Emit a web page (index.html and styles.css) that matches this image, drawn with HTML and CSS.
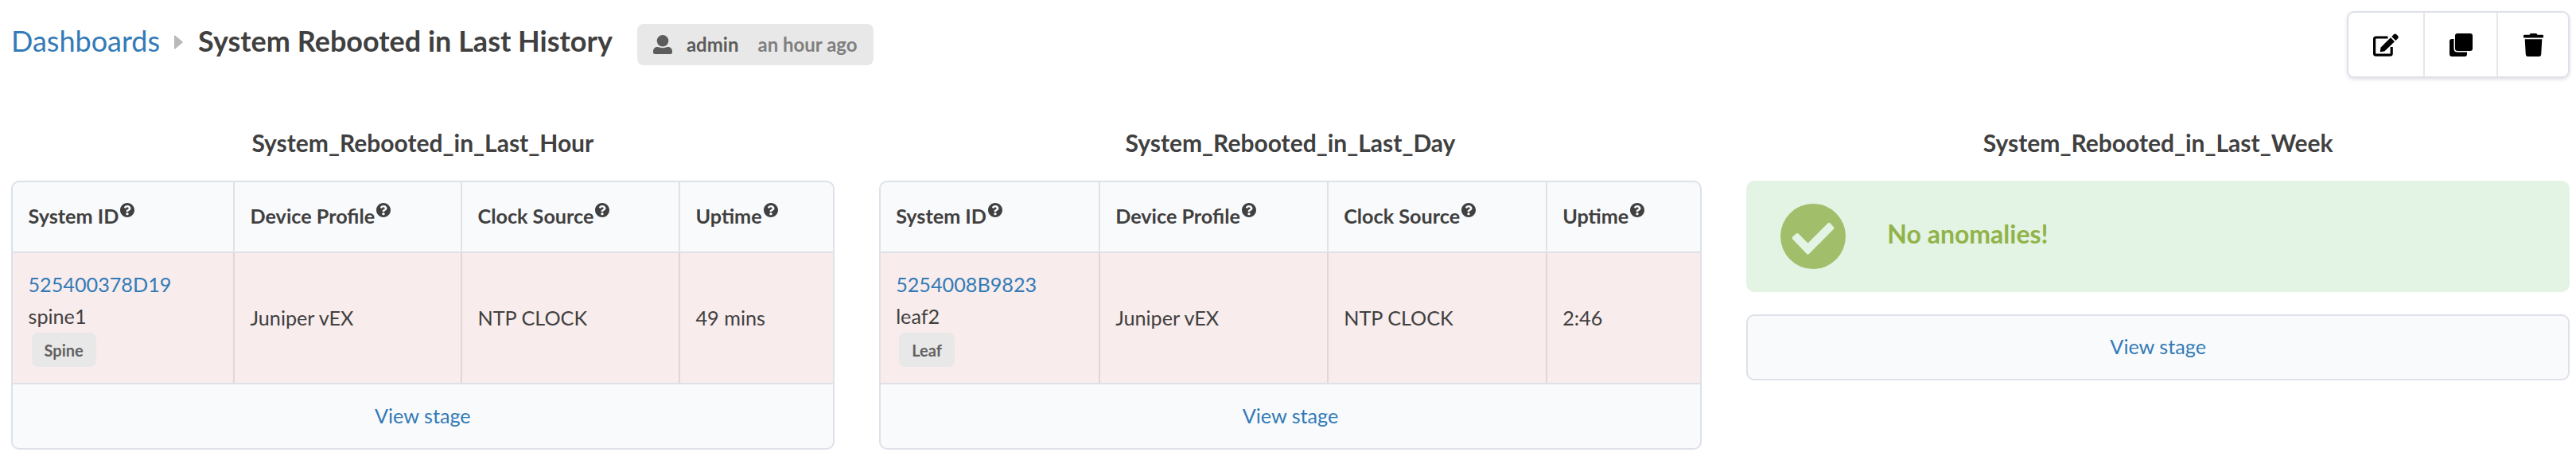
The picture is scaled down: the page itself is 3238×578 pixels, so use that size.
FILE: index.html
```
<!DOCTYPE html>
<html lang="en">
<head>
<meta charset="utf-8">
<title>System Rebooted in Last History</title>
<link rel="stylesheet" href="styles.css">
</head>
<body>
<svg class="sprite" aria-hidden="true">
  <symbol id="help" viewBox="8 8 496 496"><path fill-rule="evenodd" d="M504 256c0 137-111 248-248 248S8 393 8 256 119 8 256 8s248 111 248 248zM262.700 90c-54.500 0-89.300 23-116.500 63.800-3.500 5.300-2.400 12.400 2.700 16.300l34.700 26.300c5.200 3.900 12.600 3 16.700-2.100 17.900-22.700 30.100-35.800 57.300-35.800 20.400 0 45.700 13.100 45.700 33 0 15-12.400 22.700-32.500 34C247.100 238.500 216 254.900 216 296v4c0 6.600 5.400 12 12 12h56c6.600 0 12-5.400 12-12v-1.300c0-28.500 83.200-29.600 83.200-106.700 0-58-60.200-102-116.500-102zM256 338c-25.400 0-46 20.600-46 46s20.600 46 46 46 46-20.600 46-46-20.600-46-46-46z"/></symbol>
</svg>
<header class="topbar">
  <nav class="crumbs">
    <a class="link" href="#">Dashboards</a>
    <svg class="caret" viewBox="0 0 11 18"><path d="M0 1Q0 0 1 .6L10.400 8.200Q11 9 10.400 9.800L1 17.400Q0 18 0 17Z"/></svg>
    <h1>System Rebooted in Last History</h1>
  </nav>
  <div class="author">
    <svg class="user" viewBox="0 0 24 24"><ellipse cx="12" cy="7.300" rx="7.300" ry="7.300"/><path d="M0 21.500V20.500C0 17 2.500 15 5.500 15Q7 15 8 15.600Q12 17 16 15.600Q17 15 18.500 15C21.500 15 24 17 24 20.500V21.500Q24 24 21.500 24H2.500Q0 24 0 21.500Z"/></svg>
    <span class="name">admin</span><span class="when">an hour ago</span>
  </div>
  <div class="actions">
    <button class="edit" aria-label="Edit"><svg viewBox="0 0 32 29"><path fill="none" stroke="#000" stroke-width="3.200" d="M18.500 5H3.600Q1.600 5 1.600 7V25.200Q1.600 27.200 3.600 27.200H21.200Q23.200 27.200 23.200 25.200V17"/><path d="M22 5.200L27 10.200L14.500 22.300L9.800 23.300Q8.600 23.400 8.800 22.200L9.600 17.400ZM23.300 4L25.900 1.200Q27.500-.3 29 1.100L31.100 3.100Q32.500 4.700 31.100 6.200L28.400 8.900Z"/></svg></button>
    <button class="clone" aria-label="Clone"><svg viewBox="0 0 29 29"><path d="M10 0H26Q29 0 29 3V19Q29 22 26 22H10Q7 22 7 19V3Q7 0 10 0Z"/><path d="M5.500 7V19Q5.500 23.500 10 23.500H22V26Q22 29 19 29H3Q0 29 0 26V10Q0 7 3 7Z"/></svg></button>
    <button class="delete" aria-label="Delete"><svg viewBox="0 0 25 29"><path d="M1 1.800H7.500L8.200.6Q8.500 0 9.200 0H15.800Q16.500 0 16.800.6L17.500 1.800H24Q25 1.800 25 2.800V4.600Q25 5.600 24 5.600H1Q0 5.600 0 4.600V2.800Q0 1.800 1 1.800ZM1.700 7.300H23.300L22.200 26.500Q22 29 19.500 29H5.500Q3 29 2.800 26.500Z"/></svg></button>
  </div>
</header>
<main class="panels">
  <section class="panel">
    <h2>System_Rebooted_in_Last_Hour</h2>
    <div class="card">
      <div class="grid hour">
        <div class="th">System ID<svg class="help"><use href="#help"/></svg></div>
        <div class="th">Device Profile<svg class="help"><use href="#help"/></svg></div>
        <div class="th">Clock Source<svg class="help"><use href="#help"/></svg></div>
        <div class="th">Uptime<svg class="help"><use href="#help"/></svg></div>
        <div class="td system"><a class="link" href="#">525400378D19</a><span>spine1</span><span class="chip">Spine</span></div>
        <div class="td">Juniper vEX</div>
        <div class="td">NTP CLOCK</div>
        <div class="td">49 mins</div>
      </div>
      <a class="link stage" href="#">View stage</a>
    </div>
  </section>
  <section class="panel">
    <h2>System_Rebooted_in_Last_Day</h2>
    <div class="card">
      <div class="grid day">
        <div class="th">System ID<svg class="help"><use href="#help"/></svg></div>
        <div class="th">Device Profile<svg class="help"><use href="#help"/></svg></div>
        <div class="th">Clock Source<svg class="help"><use href="#help"/></svg></div>
        <div class="th">Uptime<svg class="help"><use href="#help"/></svg></div>
        <div class="td system"><a class="link" href="#">5254008B9823</a><span>leaf2</span><span class="chip">Leaf</span></div>
        <div class="td">Juniper vEX</div>
        <div class="td">NTP CLOCK</div>
        <div class="td">2:46</div>
      </div>
      <a class="link stage" href="#">View stage</a>
    </div>
  </section>
  <section class="panel">
    <h2>System_Rebooted_in_Last_Week</h2>
    <div class="ok">
      <svg class="check" viewBox="0 0 82 82"><circle cx="41" cy="41" r="41"/><path d="M15.300 41.500L20 37.500Q21.500 36.500 23 38L34.500 49.500L59.500 24.500Q61 23 62.500 24.500L66.700 29Q68 30.500 66.700 32L36 63Q34.500 64.400 33 63L15.300 44.500Q14 43 15.300 41.500Z"/></svg>
      <strong>No anomalies!</strong>
    </div>
    <div class="card single"><a class="link stage" href="#">View stage</a></div>
  </section>
</main>
</body>
</html>
```
FILE: styles.css
```
* { box-sizing: border-box; }
body { margin: 0; height: 578px; overflow: hidden; background: #fff; color: #404040; font: 25.2px/40px Lato, sans-serif; }
h1, h2 { margin: 0; font-weight: 700; }
a { text-decoration: none; }
.link { color: #337ab7; }
.sprite { position: absolute; width: 0; height: 0; }

.topbar { display: flex; align-items: flex-start; height: 159px; padding: 14px 8px 0 14px; }
.crumbs { display: flex; align-items: center; height: 74px; font-size: 36px; }
.caret { width: 11px; height: 18px; margin: 4px 19px 0 18px; fill: #b9b9b9; }
h1 { font-size: 36px; }
.author { display: flex; align-items: center; height: 52px; width: 297px; margin: 16px 0 0 31px; padding: 0 20px; border-radius: 8px; background: #e8e8e8; font-size: 24px; font-weight: 700; color: #5c5c5c; white-space: nowrap; }
.user { width: 24px; height: 24px; margin: 0 18px 0 0; fill: #5c5c5c; }
.when { margin-left: 24px; color: #7f7f7f; }
.actions { display: flex; width: 280px; height: 84px; margin-left: auto; border: 2px solid #dee1e9; border-radius: 9px; box-shadow: 0 2px 4px rgba(34, 36, 80, .14); }
.actions button { display: flex; align-items: center; justify-content: center; padding: 0; border: 0; background: none; }
.actions svg { height: 29px; }
.edit { width: 94px; }
.clone { width: 92px; }
.delete { width: 90px; }
.actions button + button { border-left: 2px solid #e6e6e6; }

.panels { display: grid; grid-template-columns: repeat(3, 1fr); gap: 56px; padding: 0 8px 0 14px; }
h2 { height: 68px; font-size: 30px; text-align: center; }
.card { overflow: hidden; border: 2px solid #dee1e9; border-radius: 10px; background: #f9fafc; }
.grid { display: grid; grid-template-rows: 89px 163px; }
.hour { grid-template-columns: 279px 286px 274px 1fr; }
.day { grid-template-columns: 276px 287px 275px 1fr; }
.th, .td { display: flex; align-items: center; padding-left: 19.5px; border-right: 2px solid #e0e2e7; }
.th { padding-bottom: 3px; border-bottom: 2px solid #dfe1e6; font-weight: 700; }
.td { padding-bottom: 1px; background: #f8ecec; border-color: #e1d7d8; }
.th:nth-child(4n), .td:nth-child(4n) { border-right: 0; }
.help { width: 18px; height: 18px; margin: -14px 0 0 2px; fill: #404040; }
.system { flex-direction: column; align-items: flex-start; padding-top: 19px; }
.chip { margin: 1px 0 0 4px; padding: 0 16px; height: 43px; border-radius: 8px; background: #e8e8e8; color: #606060; font-size: 20px; line-height: 45px; font-weight: 700; }
.stage { display: block; height: 80px; line-height: 78px; text-align: center; }
.grid + .stage { height: 82px; border-top: 2px solid #dee1e9; }
.single .stage { height: 79px; line-height: 77px; }
.ok { display: flex; align-items: center; gap: 52px; height: 140px; margin-bottom: 28px; padding-left: 43px; border-radius: 10px; background: #e3f4e4; color: #91b34a; font-size: 32px; }
.ok strong { padding-bottom: 6px; }
.check { width: 82px; height: 82px; fill: #a1be6b; }
.check path { fill: #e3f4e4; }
```
